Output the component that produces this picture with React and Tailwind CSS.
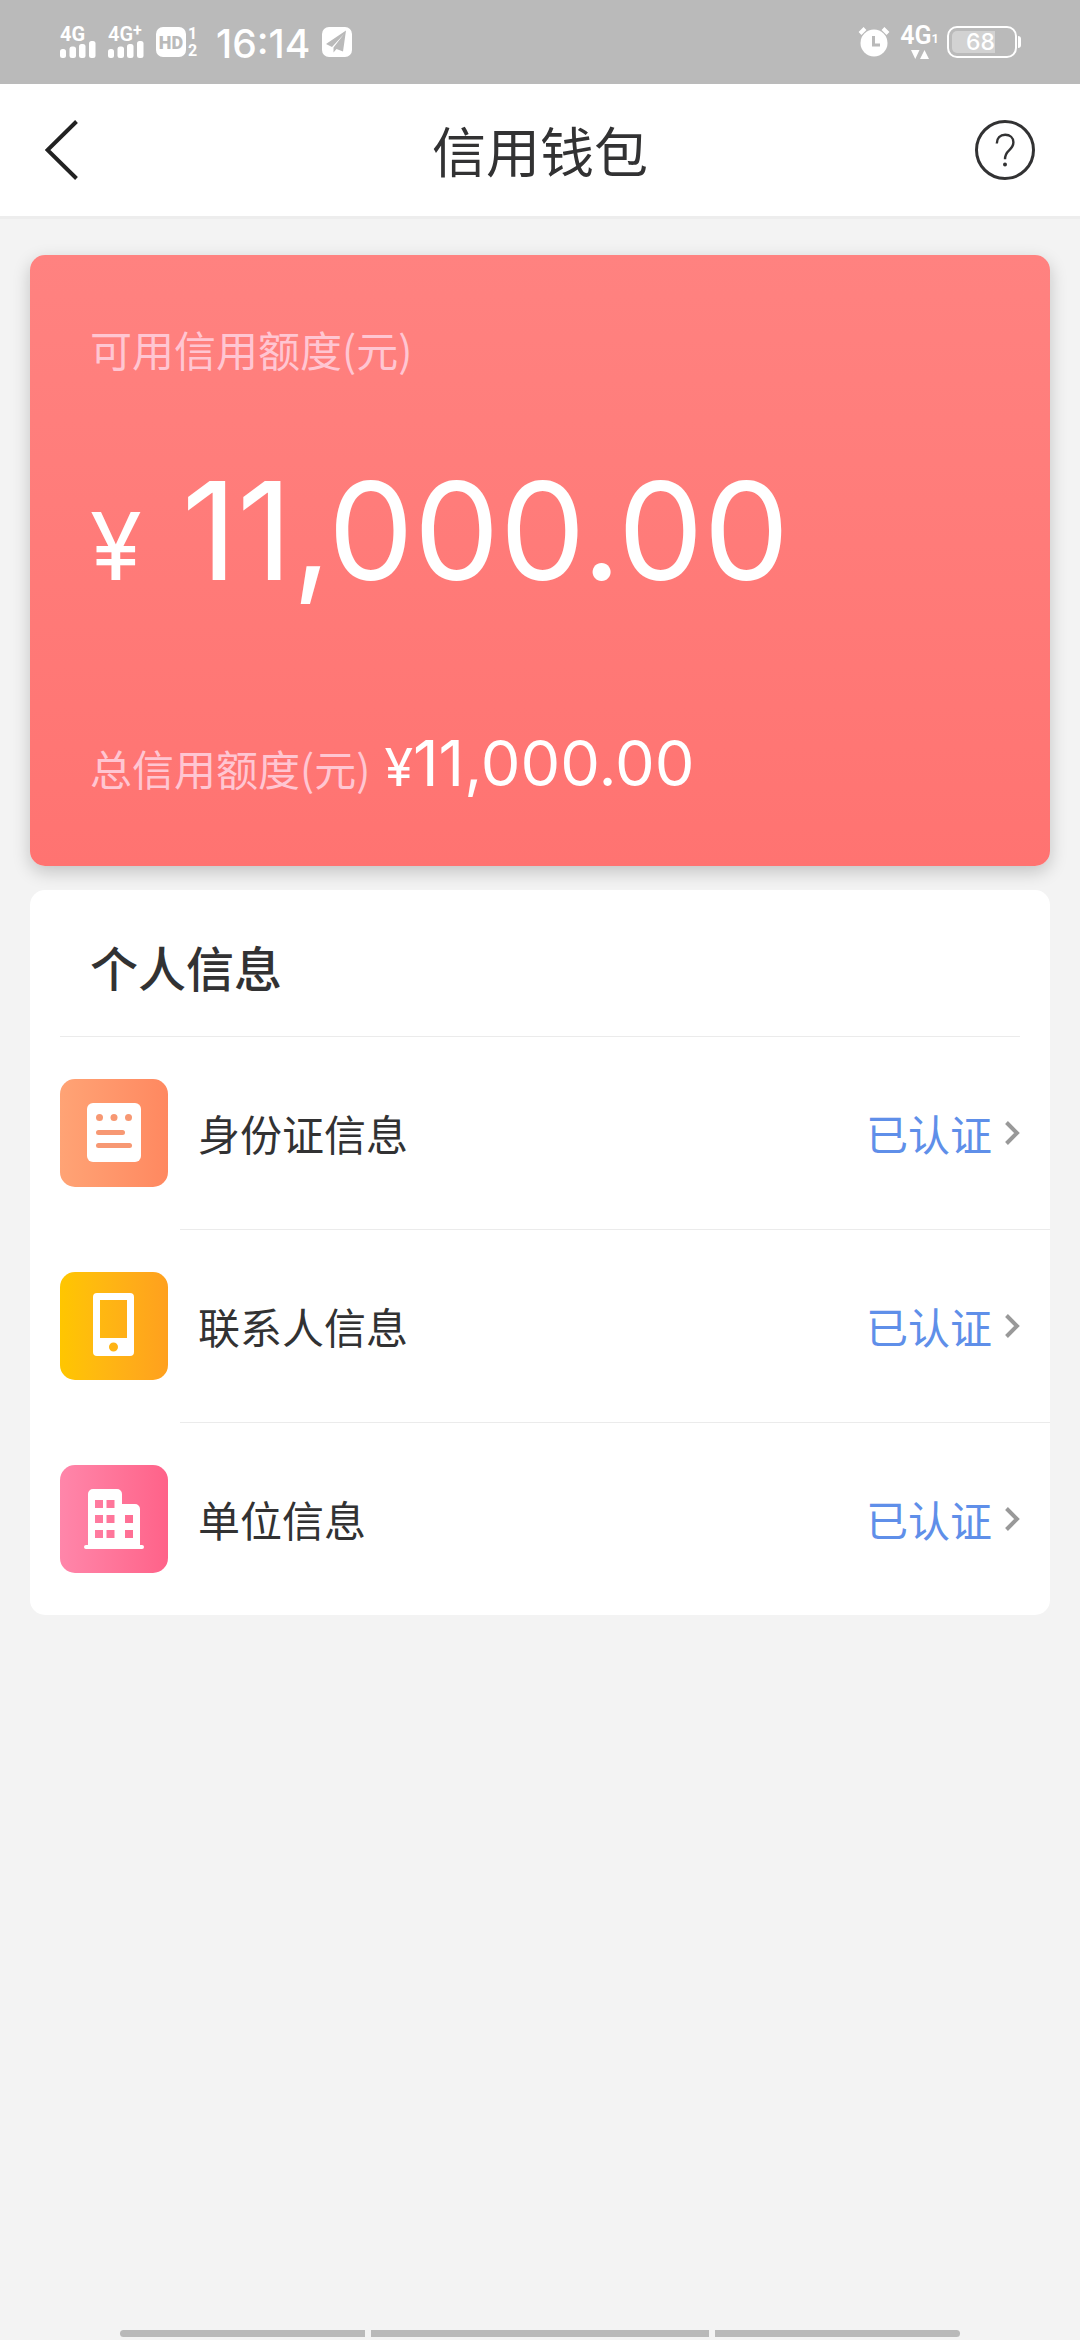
const cjk = "font-['Noto_Sans_CJK_SC',sans-serif]";

function SignalBars() {
  return (
    <svg viewBox="0 0 36 17" className="h-[17px] w-9" fill="currentColor" aria-hidden="true">
      <rect x="0" y="8" width="6" height="9" rx="2.5" />
      <rect x="9.5" y="5.5" width="6.5" height="11.5" rx="2.5" />
      <rect x="19" y="3" width="6.5" height="14" rx="2.5" />
      <rect x="29" y="0" width="6.5" height="17" rx="2.5" />
    </svg>
  );
}

function StatusBar() {
  return (
    <div className="flex h-21 items-center justify-between bg-[#bababa] pr-[59px] pl-15 font-[Roboto,sans-serif] text-white">
      <div className="flex items-center">
        <div className="flex w-12 flex-col">
          <span className="text-[20px] leading-[14px] font-bold">4G</span>
          <SignalBars />
        </div>
        <div className="flex w-12 flex-col">
          <span className="flex text-[20px] leading-[14px] font-semibold">
            4G<span className="text-[16px] leading-[8px] font-bold">+</span>
          </span>
          <SignalBars />
        </div>
        <div className="flex w-15 gap-0.5">
          <span className="flex size-[30px] items-center justify-center rounded-[7px] bg-white text-[18px] font-black text-[#bababa]">
            HD
          </span>
          <span className="flex flex-col items-center justify-between text-[16px] leading-[13px] font-bold">
            <span>1</span>
            <span>2</span>
          </span>
        </div>
        <span className="w-[106px] pt-1 font-[Inter,sans-serif] text-[39px] leading-10 font-medium">16:14</span>
        <svg viewBox="0 0 30 30" className="size-[30px]" aria-hidden="true">
          <rect width="30" height="30" rx="7" fill="#fff" />
          <path d="M24 3.5 4 17l6 3L22 7 11.5 20.500v5l3-3.500 6.500 2.500z" fill="#bababa" />
        </svg>
      </div>
      <div className="flex items-center">
        <svg viewBox="0 0 32 32" className="mr-3 size-8" aria-hidden="true">
          <circle cx="16" cy="17" r="13.500" fill="#fff" />
          <path d="M2 7.500 7 2.500M30 7.500 25 2.500" stroke="#fff" strokeWidth="4" />
          <path d="M15.500 10v9h6.500" fill="none" stroke="#bababa" strokeWidth="3" />
        </svg>
        <div className="mr-2.5 flex w-[35px] flex-col items-center gap-1">
          <span className="flex items-end text-[25px] leading-5 font-semibold">
            4G<span className="text-[13px] leading-3.5">1</span>
          </span>
          <svg viewBox="0 0 18 9" className="h-[9px] w-[18px]" fill="currentColor" aria-hidden="true">
            <path d="M0 0h8.500L4.250 9zM9 9h9L13.500 0z" />
          </svg>
        </div>
        <div className="flex items-center gap-px">
          <div className="h-8 w-[70px] rounded-[10px] border-2 border-white p-[3px]">
            <div className="flex h-full w-[43px] items-center justify-end rounded-l-[5px] bg-[#d2d2d2] font-[Inter,sans-serif] text-[23px] font-medium">
              68
            </div>
          </div>
          <div className="h-3 w-[3px] rounded-r-full bg-white" />
        </div>
      </div>
    </div>
  );
}

function Header() {
  return (
    <header className="flex h-[135px] items-center justify-between border-b-3 border-[#ededed] bg-white px-[45px] text-[#323233]">
      <button type="button" aria-label="返回" className="w-15">
        <svg viewBox="0 0 60 60" className="size-15" fill="none" stroke="#222" strokeWidth="4">
          <path d="M31.500 1.500 2.500 30l29 28.500" />
        </svg>
      </button>
      <h1 className="text-[54px] leading-[72px]">信用钱包</h1>
      <button type="button" aria-label="帮助" className="w-15">
        <svg viewBox="0 0 60 60" className="size-15" fill="none" stroke="#323233" strokeWidth="3">
          <circle cx="30" cy="30" r="28.500" />
          <path
            d="M21.800 23.500c0-5.500 3.400-8.700 8.400-8.700 4.800 0 8.200 3 8.200 7.500 0 3.600-1.700 5.700-4.300 8-2.900 2.600-4.100 4.400-4.100 9"
            strokeWidth="2.400"
          />
          <circle cx="30" cy="44.500" r="2" fill="#323233" stroke="none" />
        </svg>
      </button>
    </header>
  );
}

function CreditCard() {
  return (
    <section className="mx-[30px] mt-9 rounded-[15px] bg-linear-to-b from-[#ff8280] to-[#ff7371] px-15 pt-16 pb-16 text-white shadow-[0_6px_18px_rgba(0,0,0,0.2)]">
      <p className="text-[42px] leading-15 text-[#ffc6d2]">可用信用额度(元)</p>
      <p className="mt-20 flex h-37 items-baseline gap-10 font-[Inter,sans-serif] text-[136px] leading-36">
        <span className="text-[94px]">¥</span>
        <span>11,000.00</span>
      </p>
      <p className="mt-30 flex h-[75px] items-baseline gap-3.5 leading-18">
        <span className="text-[42px] text-[#ffc6d2]">总信用额度(元)</span>
        <span className="font-[Inter,sans-serif] text-[63px]">
          <span className="text-[52px]">¥</span>11,000.00
        </span>
      </p>
    </section>
  );
}

function IdIcon() {
  return (
    <svg viewBox="0 0 108 108" className="size-27" aria-hidden="true">
      <rect x="27" y="24" width="54" height="59" rx="6" fill="#fff" />
      <g fill="#f79873">
        <circle cx="39.500" cy="38.500" r="3.500" />
        <circle cx="54" cy="38.500" r="3.500" />
        <circle cx="68.500" cy="38.500" r="3.500" />
        <rect x="36" y="51" width="29" height="5" rx="2.500" />
        <rect x="36" y="64" width="36" height="5" rx="2.500" />
      </g>
    </svg>
  );
}

function PhoneIcon() {
  return (
    <svg viewBox="0 0 108 108" className="size-27" aria-hidden="true">
      <path
        fill="#fff"
        fillRule="evenodd"
        d="M37 21h33a4 4 0 0 1 4 4v55a4 4 0 0 1-4 4H37a4 4 0 0 1-4-4V25a4 4 0 0 1 4-4zM40 28v38h27V28zM53.500 70.500a4.500 4.500 0 1 0 0 9 4.500 4.500 0 0 0 0-9z"
      />
    </svg>
  );
}

function BuildingIcon() {
  return (
    <svg viewBox="0 0 108 108" className="size-27" aria-hidden="true">
      <path
        fill="#fff"
        fillRule="evenodd"
        d="M33 24h24a5 5 0 0 1 5 5v10h13a5 5 0 0 1 5 5v36h2a2 2 0 0 1 0 4H26a2 2 0 0 1 0-4h2V29a5 5 0 0 1 5-5zM35 35v8h8v-8zM46.500 35v8h8v-8zM35 50v8h8v-8zM46.500 50v8h8v-8zM65 50v8h8v-8zM35 65v8h8v-8zM46.500 65v8h8v-8zM65 65v8h8v-8z"
      />
    </svg>
  );
}

const rows = [
  { label: "身份证信息", Icon: IdIcon, tile: "from-[#ffa375] to-[#ff8860]" },
  { label: "联系人信息", Icon: PhoneIcon, tile: "from-[#ffc600] to-[#ffa01e]" },
  { label: "单位信息", Icon: BuildingIcon, tile: "from-[#ff86aa] to-[#ff6289]" },
];

function InfoList() {
  return (
    <section className="mx-[30px] mt-6 rounded-[15px] bg-white text-[#323233]">
      <h2 className="mx-[30px] border-b border-[#ebebeb] px-[30px] pt-10 pb-[34px] text-[48px] leading-18 font-medium">
        个人信息
      </h2>
      <ul>
        {rows.map(({ label, Icon, tile }, i) => (
          <li key={label}>
            {i > 0 && <div className="ml-[150px] h-px bg-[#ebebeb]" />}
            <a href="#" className="flex items-center px-[30px] py-[42px] text-[42px] leading-15">
              <span className={`rounded-[15px] bg-linear-to-r ${tile}`}>
                <Icon />
              </span>
              <span className="ml-[30px] flex-1">{label}</span>
              <span className="text-[#5f8fe9]">已认证</span>
              <svg
                viewBox="0 0 16 26"
                className="ml-3 h-[26px] w-4"
                fill="none"
                stroke="#999"
                strokeWidth="4"
                aria-hidden="true"
              >
                <path d="M2.500 2.500 13 13 2.500 23.500" />
              </svg>
            </a>
          </li>
        ))}
      </ul>
    </section>
  );
}

export default function App() {
  return (
    <div className={`flex min-h-screen flex-col bg-[#f3f3f3] ${cjk}`} lang="zh-CN">
      <StatusBar />
      <Header />
      <main className="flex-1">
        <CreditCard />
        <InfoList />
      </main>
      <div className="flex gap-1.5 px-30 pb-[3px]" aria-hidden="true">
        <div className="h-[7px] flex-[245] rounded-l-full bg-[#b9b9b9]" />
        <div className="h-[7px] flex-[338] bg-[#b9b9b9]" />
        <div className="h-[7px] flex-[245] rounded-r-full bg-[#b9b9b9]" />
      </div>
    </div>
  );
}
